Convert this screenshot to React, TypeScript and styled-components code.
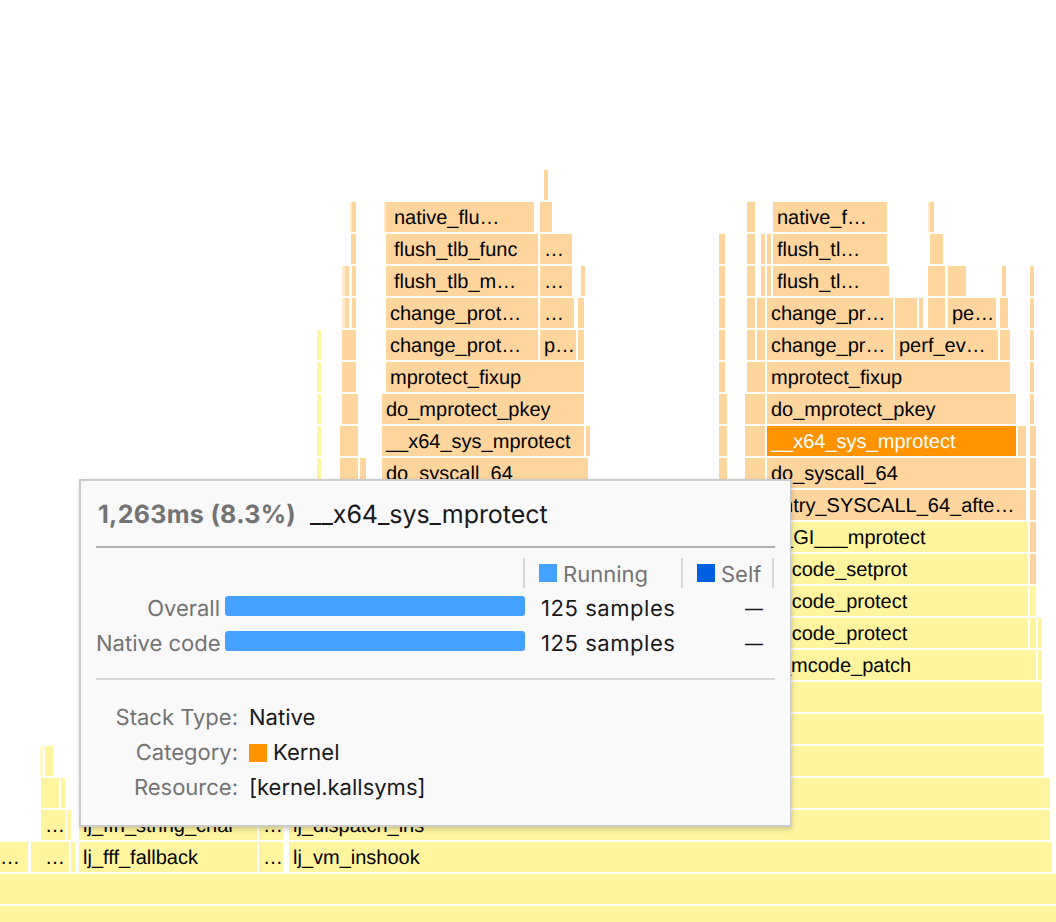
import { createGlobalStyle, styled } from 'styled-components';

type Kind = 'orange' | 'yellow' | 'faint' | 'faintYellow' | 'selected';
type Frame = [number, number, string?, Kind?];
type FlameRow = { kind: Kind; frames: Frame[] };

const rows: FlameRow[] = [
  { kind: 'orange', frames: [[544, 547]] },
  {
    kind: 'orange',
    frames: [
      [350, 352, '', 'faint'], [352, 356], [384, 386, '', 'faint'], [386, 388], [390, 534, 'native_flu…'], [540, 552],
      [747, 755], [773, 887, 'native_f…'], [928, 929, '', 'faint'], [930, 932],
    ],
  },
  {
    kind: 'orange',
    frames: [
      [351, 356], [386, 388], [390, 538, 'flush_tlb_func'], [540, 572, '…'],
      [719, 725], [747, 755], [761, 765], [767, 771], [773, 887, 'flush_tl…'], [930, 943],
    ],
  },
  {
    kind: 'orange',
    frames: [
      [342, 344, '', 'faint'], [345, 346], [352, 356], [386, 388], [390, 538, 'flush_tlb_m…'], [540, 572, '…'], [581, 584],
      [719, 725], [747, 755], [761, 765], [767, 771], [773, 889, 'flush_tl…'], [928, 945], [948, 966], [1002, 1004], [1030, 1032],
    ],
  },
  {
    kind: 'orange',
    frames: [
      [342, 344, '', 'faint'], [345, 346], [352, 356], [386, 538, 'change_prot…'], [540, 574, '…'], [578, 584],
      [719, 725], [747, 755], [757, 759], [761, 765], [767, 893, 'change_pr…'], [895, 917], [919, 923], [928, 945], [948, 996, 'pe…'], [1000, 1008], [1030, 1032],
    ],
  },
  {
    kind: 'orange',
    frames: [
      [317, 319, '', 'yellow'], [342, 356], [386, 538, 'change_prot…'], [540, 576, 'p…'], [578, 584],
      [719, 725], [747, 755], [757, 765], [767, 893, 'change_pr…'], [895, 998, 'perf_ev…'], [1000, 1010], [1030, 1032],
    ],
  },
  {
    kind: 'orange',
    frames: [
      [317, 321, '', 'yellow'], [342, 356], [386, 584, 'mprotect_fixup'],
      [719, 725], [747, 765], [767, 1010, 'mprotect_fixup'], [1030, 1032],
    ],
  },
  {
    kind: 'orange',
    frames: [
      [317, 321, '', 'yellow'], [342, 358], [382, 584, 'do_mprotect_pkey'],
      [719, 727], [745, 765], [767, 1016, 'do_mprotect_pkey'], [1030, 1032],
    ],
  },
  {
    kind: 'orange',
    frames: [
      [317, 321, '', 'yellow'], [340, 358], [382, 584, '__x64_sys_mprotect'], [586, 588],
      [719, 727], [745, 765], [767, 1016, '__x64_sys_mprotect', 'selected'], [1018, 1026], [1030, 1036],
    ],
  },
  {
    kind: 'orange',
    frames: [
      [317, 321, '', 'yellow'], [340, 358], [360, 366], [382, 588, 'do_syscall_64'],
      [719, 727], [745, 765], [767, 1026, 'do_syscall_64'], [1030, 1036],
    ],
  },
  { kind: 'orange', frames: [[767, 1026, 'entry_SYSCALL_64_afte…'], [1030, 1036]] },
  { kind: 'yellow', frames: [[767, 1028, '__GI___mprotect'], [1030, 1036, '', 'orange']] },
  { kind: 'yellow', frames: [[771, 1028, 'mcode_setprot'], [1030, 1036, '', 'orange']] },
  { kind: 'yellow', frames: [[771, 1028, 'mcode_protect'], [1030, 1036]] },
  { kind: 'yellow', frames: [[771, 1028, 'mcode_protect'], [1030, 1036], [1038, 1040]] },
  { kind: 'yellow', frames: [[767, 1036, 'lj_mcode_patch'], [1038, 1040]] },
  { kind: 'yellow', frames: [[700, 1042]] },
  { kind: 'yellow', frames: [[700, 1044]] },
  { kind: 'yellow', frames: [[40, 43, '', 'faintYellow'], [45, 53], [700, 1044]] },
  { kind: 'yellow', frames: [[41, 59], [61, 63], [700, 1050]] },
  {
    kind: 'yellow',
    frames: [[41, 66, '…'], [67, 69], [79, 257, 'lj_ffh_string_char'], [259, 283, '…'], [289, 1050, 'lj_dispatch_ins']],
  },
  {
    kind: 'yellow',
    frames: [
      [-4, 28, '…'], [31, 33], [34, 35], [37, 39], [41, 69, '…'], [71, 75],
      [79, 257, 'lj_fff_fallback'], [259, 283, '…'], [289, 1052, 'lj_vm_inshook'],
    ],
  },
  { kind: 'yellow', frames: [[0, 1056]] },
  { kind: 'yellow', frames: [[0, 1056]] },
];

const categories = [
  { name: 'Overall', running: '125 samples', self: '—' },
  { name: 'Native code', running: '125 samples', self: '—' },
];

export default function App() {
  return (
    <>
      <GlobalStyle />
      <Page>
        <FlameGraph>
          {rows.map((row, rowIndex) => (
            <Row key={rowIndex}>
              {row.frames.map(([start, end, label, kind], frameIndex) => (
                <FrameBox key={frameIndex} $kind={kind ?? row.kind} style={{ left: start, width: end - start }}>
                  {label}
                </FrameBox>
              ))}
            </Row>
          ))}
        </FlameGraph>

        <Tooltip>
          <TitleLine>
            <Duration>1,263ms (8.3%)</Duration>
            <FunctionName>__x64_sys_mprotect</FunctionName>
          </TitleLine>

          <BreakdownGrid>
            <HeaderSpacer />
            <HeaderCell>
              <Swatch $color="#45a1ff" />
              <HeaderLabel>Running</HeaderLabel>
            </HeaderCell>
            <HeaderCell>
              <Swatch $color="#0060df" />
              <HeaderLabel>Self</HeaderLabel>
            </HeaderCell>
            {categories.map((category) => (
              <BreakdownRow key={category.name}>
                <RowLabel>{category.name}</RowLabel>
                <Bar />
                <Samples>{category.running}</Samples>
                <SelfValue>{category.self}</SelfValue>
              </BreakdownRow>
            ))}
          </BreakdownGrid>

          <Details>
            <DetailLabel>Stack Type:</DetailLabel>
            <DetailValue>Native</DetailValue>
            <DetailLabel>Category:</DetailLabel>
            <DetailValue>
              <Swatch $color="#ff9400" />
              Kernel
            </DetailValue>
            <DetailLabel>Resource:</DetailLabel>
            <DetailValue>[kernel.kallsyms]</DetailValue>
          </Details>
        </Tooltip>
      </Page>
    </>
  );
}

const GlobalStyle = createGlobalStyle`
  html, body {
    margin: 0;
    background: #fff;
    text-rendering: geometricPrecision;
  }
`;

const Page = styled.div`
  position: relative;
  width: 1056px;
  height: 922px;
  overflow: hidden;
`;

const FlameGraph = styled.div`
  display: flex;
  flex-direction: column;
  gap: 2px;
  padding-top: 170px;
`;

const Row = styled.div`
  position: relative;
  flex: none;
  height: 30px;
`;

const frameColors: Record<Kind, string> = {
  orange: '#ffd59e',
  yellow: '#fff59f',
  faint: '#ffe8cc',
  faintYellow: '#fffacf',
  selected: '#ff9400',
};

const FrameBox = styled.div<{ $kind: Kind }>`
  position: absolute;
  top: 0;
  height: 30px;
  box-sizing: border-box;
  padding-left: 4px;
  overflow: hidden;
  white-space: nowrap;
  background: ${(props) => frameColors[props.$kind]};
  color: ${(props) => (props.$kind === 'selected' ? '#fff' : '#000')};
  font: 20px/32px 'Liberation Sans', Arial, sans-serif;
`;

const Tooltip = styled.div`
  position: absolute;
  left: 79px;
  top: 479px;
  width: 712px;
  height: 348px;
  box-sizing: border-box;
  padding: 0 15px;
  background: #f9f9fa;
  border: 2px solid #cbcbcb;
  border-right-width: 1.5px;
  box-shadow: 1px 2px 5px rgba(0, 0, 0, 0.2);
  font-family: Inter, 'Liberation Sans', sans-serif;
  font-size: 22px;
  color: #18181a;
`;

const TitleLine = styled.div`
  display: flex;
  gap: 14px;
  align-items: center;
  height: 62px;
  padding: 3px 0 0 2px;
  border-bottom: 2px solid #b1b1b3;
  font-size: 25px;
`;

const Duration = styled.span`
  font-weight: 700;
  letter-spacing: 0.3px;
  color: #737373;
`;

const FunctionName = styled.span`
  letter-spacing: -0.05px;
  color: #18181a;
`;

const BreakdownGrid = styled.div`
  display: grid;
  grid-template-columns: 429px 158px 91px;
  align-content: start;
  padding-top: 10px;
  height: 132px;
  box-sizing: border-box;
  border-bottom: 2px solid #d7d7db;
`;

const HeaderSpacer = styled.div`
  height: 30px;
  border-right: 2px solid #d7d7db;
`;

const HeaderCell = styled.div`
  display: flex;
  align-items: center;
  gap: 6px;
  height: 30px;
  padding-left: 14px;
  border-right: 2px solid #d7d7db;
  color: #737373;
`;

const HeaderLabel = styled.span`
  padding-top: 4px;
`;

const Swatch = styled.span<{ $color: string }>`
  flex: none;
  width: 18px;
  height: 18px;
  background: ${(props) => props.$color};
`;

const BreakdownRow = styled.div`
  grid-column: 1 / -1;
  display: grid;
  grid-template-columns: 124px 300px 157px 1fr;
  column-gap: 5px;
  align-items: center;
  height: 35px;
`;

const RowLabel = styled.div`
  padding-top: 6px;
  text-align: right;
  white-space: nowrap;
  color: #737373;
`;

const Bar = styled.div`
  height: 20px;
  border-radius: 3px;
  background: #45a1ff;
`;

const Samples = styled.div`
  padding: 6px 0 0 11px;
  letter-spacing: 0.55px;
  white-space: nowrap;
`;

const SelfValue = styled.div`
  padding: 8px 11px 0 0;
  font-size: 18px;
  text-align: right;
`;

const Details = styled.div`
  display: grid;
  grid-template-columns: 142px 1fr;
  column-gap: 11px;
  grid-auto-rows: 35px;
  align-items: center;
  padding-top: 20px;
`;

const DetailLabel = styled.div`
  text-align: right;
  color: #737373;
`;

const DetailValue = styled.div`
  display: flex;
  align-items: center;
  gap: 6px;
`;
